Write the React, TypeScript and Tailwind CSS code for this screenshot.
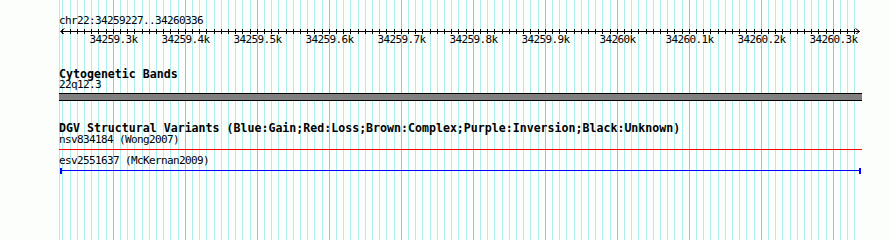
const START = 34259227
const END = 34260336
const X0 = 60.2
const PX = 0.72
const LEFT = 59
const xOf = (bp: number): number => X0 + (bp - START) * PX

const minor: number[] = []
for (let bp = 34259230; bp <= 34260330; bp += 10) minor.push(bp)
const major = minor.filter(bp => bp % 100 === 0)

const label = (bp: number): string => {
  const k = bp / 1000
  return Number.isInteger(k) ? `${k}k` : `${k.toFixed(1)}k`
}

const mono = "font-['DejaVu_Sans_Mono',monospace]"
const reg = `${mono} text-[11px] tracking-[-0.62px] leading-[10px] text-black whitespace-pre`
const bold = `${mono} font-bold text-[11.6px] leading-[12px] text-black whitespace-pre`

const Grid = (): React.ReactElement => (
  <svg className="absolute inset-0" width={890} height={240} shapeRendering="crispEdges">
    <line x1={LEFT + 0.5} y1={0} x2={LEFT + 0.5} y2={240} stroke="#afeeee" />
    {minor.map(bp => {
      const x = Math.round(xOf(bp)) + 0.5
      const isMajor = bp % 100 === 0
      return <line key={bp} x1={x} y1={0} x2={x} y2={240} stroke={isMajor ? '#93c4e4' : '#afeeee'} />
    })}
  </svg>
)

const Ruler = (): React.ReactElement => {
  const y = 5.5
  const x1 = 60 - LEFT + 0.5
  const x2 = Math.round(xOf(END)) - LEFT + 0.5
  return (
    <svg width={803} height={8} shapeRendering="crispEdges" className="block">
      <line x1={x1} y1={y} x2={x2} y2={y} stroke="#000" />
      <path d={`M${x1 + 4} ${y - 3} L${x1} ${y} L${x1 + 4} ${y + 3}`} fill="none" stroke="#000" shapeRendering="auto" />
      <path d={`M${x2 - 4} ${y - 3} L${x2} ${y} L${x2 - 4} ${y + 3}`} fill="none" stroke="#000" shapeRendering="auto" />
      {minor.map(bp => {
        const x = Math.round(xOf(bp)) - LEFT + 0.5
        return <line key={bp} x1={x} y1={y - 2.5} x2={x} y2={y + 2.5} stroke="#000" />
      })}
    </svg>
  )
}

const App = (): React.ReactElement => (
  <div className="relative w-[890px] h-[240px] overflow-hidden bg-[#fcfefc]">
    <Grid />
    <div className="relative pl-[59px] pt-[16px]">
      <div className={reg}>chr22:{START}..{END}</div>
      <Ruler />
      <div className="relative mt-[1px] h-[10px]">
        {major.map(bp => (
          <span
            key={bp}
            className={`absolute top-0 -translate-x-1/2 ${reg}`}
            style={{ left: Math.round(xOf(bp)) - LEFT + 0.5 }}
          >
            {label(bp)}
          </span>
        ))}
      </div>

      <div className={`mt-[23px] ${bold}`}>Cytogenetic Bands</div>
      <div className={reg}>22q12.3</div>
      <div className="mt-[3px] w-[803px] h-[8px] border-y border-black bg-[#808080]" />

      <div className={`mt-[21px] ${bold}`}>
        DGV Structural Variants (Blue:Gain;Red:Loss;Brown:Complex;Purple:Inversion;Black:Unknown)
      </div>
      <div className={`mt-[1px] ${reg}`}>nsv834184 (Wong2007)</div>
      <div className="mt-[4px] w-[803px] h-[1px] bg-[#ff0000]" />
      <div className={`mt-[6px] ${reg}`}>esv2551637 (McKernan2009)</div>
      <div className="mt-[2px] ml-[1px] w-[801px] h-[6px] flex items-start">
        <div className="w-[2px] h-[6px] bg-[#0000ff]" />
        <div className="mt-[2px] flex-1 h-[1px] bg-[#0000ff]" />
        <div className="w-[2px] h-[6px] bg-[#0000ff]" />
      </div>
    </div>
  </div>
)

export default App
